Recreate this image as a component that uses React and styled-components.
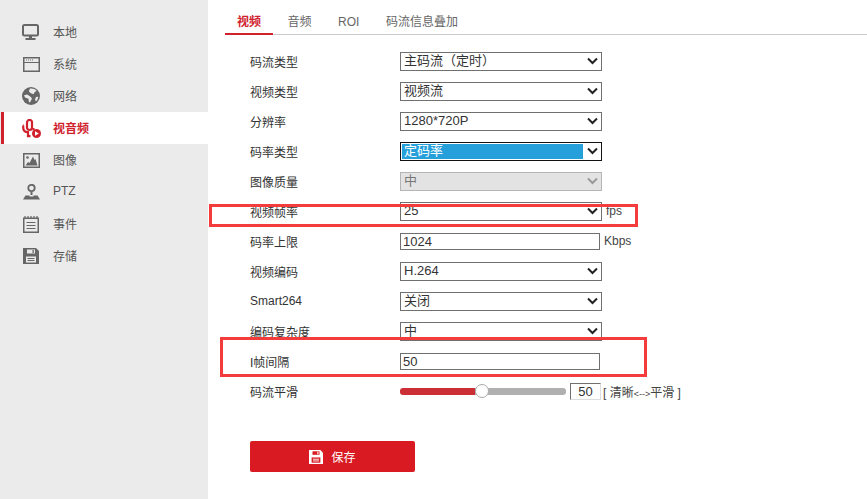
import React from "react";
import styled, { createGlobalStyle } from "styled-components";

const FONT = `"Liberation Sans", "Noto Sans CJK SC", sans-serif`;

const Global = createGlobalStyle`
  html, body { margin: 0; padding: 0; background: #fff; }
  body { font-family: ${FONT}; font-size: 12px; color: #333; }
`;

const Page = styled.div`
  position: relative;
  display: flex;
  width: 867px;
  height: 499px;
  overflow: hidden;
  background: #fff;
`;

const Sidebar = styled.nav`
  flex: 0 0 208px;
  padding-top: 16px;
  background: #ebebeb;
`;

const NavItem = styled.div`
  display: flex;
  align-items: center;
  height: 32px;
  margin-left: 1px;
  padding-left: ${(p) => (p.$active ? "18px" : "21px")};
  border-left: ${(p) => (p.$active ? "3px solid #d0222d" : "none")};
  background: ${(p) => (p.$active ? "#fff" : "transparent")};
  color: ${(p) => (p.$active ? "#d0222d" : "#555")};
  font-weight: ${(p) => (p.$active ? 700 : 400)};
  font-size: 12px;
`;

const NavText = styled.span`
  margin-top: -2px;
`;

const IconSlot = styled.span`
  display: flex;
  flex: 0 0 18px;
  justify-content: center;
  margin-right: ${(p) => (p.$active ? "12px" : "13px")};
`;

const Main = styled.main`
  flex: 1;
  padding-top: 12px;
`;

const Tabs = styled.div`
  display: flex;
  height: 22px;
  margin-left: 17px;
  border-bottom: 1px solid #ccc;
`;

const Tab = styled.div`
  height: 21px;
  padding: 0 12px;
  margin-right: 2.5px;
  border-bottom: ${(p) => (p.$active ? "2px solid #d0222d" : "none")};
  color: ${(p) => (p.$active ? "#d0222d" : "#666")};
  font-weight: ${(p) => (p.$active ? 700 : 400)};
  line-height: 20px;
`;

const Form = styled.div`
  padding: 11px 0 0 42px;
`;

const Row = styled.div`
  display: flex;
  align-items: center;
  height: 30px;
`;

const Label = styled.label`
  flex: 0 0 150px;
  color: #333;
  font-size: 12px;
`;

const SelectWrap = styled.div`
  position: relative;
  width: 202px;
  height: 19px;
`;

const Select = styled.select`
  display: block;
  width: 202px;
  height: 19px;
  margin: 0;
  padding: 0 0 2px 3px;
  box-sizing: border-box;
  appearance: none;
  border: 1px solid ${(p) => (p.$focus ? "#111" : p.disabled ? "#b5b5b5" : "#707070")};
  border-radius: 0;
  outline: none;
  opacity: 1;
  font: 13px ${FONT};
  color: ${(p) => (p.$focus ? "#fff" : p.disabled ? "#777" : "#333")};
  background: ${(p) =>
    p.$focus
      ? "linear-gradient(#26a0da, #26a0da) no-repeat 1px 1px / 181px 15px #fff"
      : p.disabled
        ? "#e3e3e3"
        : "#fff"};
`;

const Chevron = styled.svg`
  position: absolute;
  top: 5px;
  right: 4px;
  width: 11px;
  height: 8px;
  pointer-events: none;
`;

const TextInput = styled.input`
  display: block;
  width: 200px;
  height: 17px;
  margin: 0;
  padding: 0 0 0 2px;
  box-sizing: border-box;
  border: 1px solid #707070;
  border-radius: 0;
  outline: none;
  font: 13px ${FONT};
  color: #333;
`;

const Unit = styled.span`
  margin-left: ${(p) => p.$gap || "4px"};
  color: #444;
  font-size: 12px;
`;

const Tiny = styled.span`
  font-size: 9px;
`;

const SliderTrack = styled.div`
  position: relative;
  width: 166px;
  height: 7px;
  border-radius: 3px;
  background: linear-gradient(to right, #cc2e36 0 45%, #b0b0b0 45% 100%);
`;

const SliderThumb = styled.div`
  position: absolute;
  top: -4px;
  left: 75px;
  width: 14px;
  height: 14px;
  box-sizing: border-box;
  border: 1px solid #aaa;
  border-radius: 50%;
  background: #fff;
`;

const SliderValue = styled.div`
  width: 31px;
  height: 17px;
  margin-left: 4px;
  box-sizing: border-box;
  border: 1px solid #707070;
  border-right-color: #ddd;
  border-bottom-color: #ddd;
  font-size: 13px;
  line-height: 15px;
  text-align: center;
  color: #333;
`;

const SaveButton = styled.button`
  display: flex;
  align-items: center;
  justify-content: center;
  gap: 8px;
  width: 165px;
  height: 31px;
  margin-top: 35px;
  padding: 0;
  border: 0;
  border-radius: 2px;
  background: #d91a22;
  color: #fff;
  font: 12px ${FONT};
`;

const RedBox = styled.div`
  position: absolute;
  left: ${(p) => p.$x}px;
  top: ${(p) => p.$y}px;
  width: ${(p) => p.$w}px;
  height: ${(p) => p.$h}px;
  box-sizing: border-box;
  border: 3px solid #f53c3c;
  pointer-events: none;
`;

const G = "#666";
const R = "#d0222d";

const Monitor = () => (
  <svg width="18" height="16" viewBox="0 0 18 16">
    <rect x="1" y="1" width="15" height="10.5" rx="1.5" fill="none" stroke={G} strokeWidth="2" />
    <rect x="7" y="12" width="3" height="2" fill={G} />
    <rect x="3.5" y="14" width="10" height="2" fill={G} />
  </svg>
);
const Win = () => (
  <svg width="17" height="15" viewBox="0 0 17 15">
    <rect x="0.75" y="0.75" width="15.5" height="13.5" fill="none" stroke={G} strokeWidth="1.5" />
    <rect x="1" y="5" width="15" height="1" fill={G} />
    <path d="M3 3h1M5 3h1M7 3h1M9 3h1" stroke={G} strokeWidth="1" />
  </svg>
);
const Globe = () => (
  <svg width="18" height="18" viewBox="0 0 18 18">
    <circle cx="9" cy="9" r="9" fill={G} />
    <path d="M8 1.6c2.4-.5 5 .3 6.6 2.2l-2 1.4-1.1 2-3-1.2L6.800 4.300ZM2 8.200l3.200-.8 3 2.200 1.800 1.800-1.600 3.400-1.400.6-.6-3.600L3 10.500ZM14 10l2.300-.3c-.2 1.900-1 3.500-2.300 4.700l-1-1.900Z" fill="#ebebeb" />
  </svg>
);
const Mic = () => (
  <svg width="19" height="19" viewBox="0 0 19 19" fill="none" stroke={R}>
    <rect x="5" y="1" width="5" height="10" rx="2.500" strokeWidth="2.200" />
    <path d="M1.200 6.500v2c0 3 1.800 4.700 4.800 4.700v4h2.500" strokeWidth="2.200" />
    <rect x="1" y="5.500" width="1" height="1" fill={R} stroke="none" />
    <rect x="10.500" y="9" width="2" height="2" fill={R} stroke="none" />
    <circle cx="14.500" cy="14.500" r="4.500" fill={R} stroke="none" />
    <path d="M13 12.200v4.600l3.800-2.300Z" fill="#fff" stroke="none" />
  </svg>
);
const Picture = () => (
  <svg width="17" height="15" viewBox="0 0 17 15">
    <rect x="0.750" y="0.750" width="15.500" height="13.500" fill="none" stroke={G} strokeWidth="1.500" />
    <circle cx="4.500" cy="4.500" r="1.300" fill={G} />
    <path d="M2.500 12.500 5 9l1.500 1L10 3.500 11.500 7l1-1 2 6.500Z" fill={G} />
  </svg>
);
const Ptz = () => (
  <svg width="17" height="16" viewBox="0 0 17 16">
    <circle cx="8.500" cy="4" r="3.200" fill="none" stroke={G} strokeWidth="1.800" />
    <rect x="7.500" y="8" width="2" height="3" fill={G} />
    <path d="M0 15.500 2.500 11.500h4v1h4v-1h4l2.500 4Z" fill={G} />
  </svg>
);
const Notes = () => (
  <svg width="16" height="17" viewBox="0 0 16 17">
    <rect x="0.750" y="2.250" width="14.500" height="14" fill="none" stroke={G} strokeWidth="1.500" />
    <path d="M2 0v3M5 0v3M8 0v3M11 0v3M14 0v3" stroke={G} strokeWidth="1.200" />
    <path d="M3.500 6.500h9M3.500 9.500h9M3.500 12.500h9" stroke={G} strokeWidth="1" />
  </svg>
);
const Disk = ({ color = G, bg = "#ebebeb", size = 16 }) => (
  <svg width={size} height={size} viewBox="0 0 16 16">
    <path d="M0 0h13l3 3v13H0Z" fill={color} />
    <rect x="4" y="1.500" width="8" height="4" fill={bg} />
    <rect x="9.500" y="2" width="1.300" height="3" fill={color} />
    <rect x="3" y="8.500" width="10" height="6" fill={bg} />
    <rect x="4.500" y="10" width="7" height="1" fill={color} />
    <rect x="4.500" y="12" width="7" height="1" fill={color} />
  </svg>
);

const NAV = [
  ["本地", Monitor],
  ["系统", Win],
  ["网络", Globe],
  ["视音频", Mic, true],
  ["图像", Picture],
  ["PTZ", Ptz],
  ["事件", Notes],
  ["存储", Disk],
];

const Arrow = ({ color = "#222" }) => (
  <Chevron viewBox="0 0 11 8">
    <path d="M1 1.500 5.500 6 10 1.500" fill="none" stroke={color} strokeWidth="2" />
  </Chevron>
);

const Drop = ({ value, focus, disabled, unit }) => (
  <>
    <SelectWrap>
      <Select defaultValue={value} $focus={focus} disabled={disabled}>
        <option>{value}</option>
      </Select>
      <Arrow color={disabled ? "#999" : "#222"} />
    </SelectWrap>
    {unit && <Unit>{unit}</Unit>}
  </>
);

export default function App() {
  return (
    <Page>
      <Global />
      <Sidebar>
        {NAV.map(([name, Icon, active]) => (
          <NavItem key={name} $active={active}>
            <IconSlot $active={active}><Icon /></IconSlot>
            <NavText>{name}</NavText>
          </NavItem>
        ))}
      </Sidebar>
      <Main>
        <Tabs>
          <Tab $active>视频</Tab>
          <Tab>音频</Tab>
          <Tab>ROI</Tab>
          <Tab>码流信息叠加</Tab>
        </Tabs>
        <Form>
          <Row><Label>码流类型</Label><Drop value="主码流（定时）" /></Row>
          <Row><Label>视频类型</Label><Drop value="视频流" /></Row>
          <Row><Label>分辨率</Label><Drop value="1280*720P" /></Row>
          <Row><Label>码率类型</Label><Drop value="定码率" focus /></Row>
          <Row><Label>图像质量</Label><Drop value="中" disabled /></Row>
          <Row><Label>视频帧率</Label><Drop value="25" unit="fps" /></Row>
          <Row>
            <Label>码率上限</Label>
            <TextInput defaultValue="1024" />
            <Unit>Kbps</Unit>
          </Row>
          <Row><Label>视频编码</Label><Drop value="H.264" /></Row>
          <Row><Label>Smart264</Label><Drop value="关闭" /></Row>
          <Row><Label>编码复杂度</Label><Drop value="中" /></Row>
          <Row><Label>I帧间隔</Label><TextInput defaultValue="50" /></Row>
          <Row>
            <Label>码流平滑</Label>
            <SliderTrack><SliderThumb /></SliderTrack>
            <SliderValue>50</SliderValue>
            <Unit $gap="2px">[ 清晰<Tiny>&lt;--&gt;</Tiny>平滑 ]</Unit>
          </Row>
          <SaveButton><Disk color="#fff" bg="#d91a22" size={14} />保存</SaveButton>
        </Form>
      </Main>
      <RedBox $x={209} $y={204} $w={429} $h={23} />
      <RedBox $x={220} $y={337} $w={427} $h={40} />
    </Page>
  );
}
